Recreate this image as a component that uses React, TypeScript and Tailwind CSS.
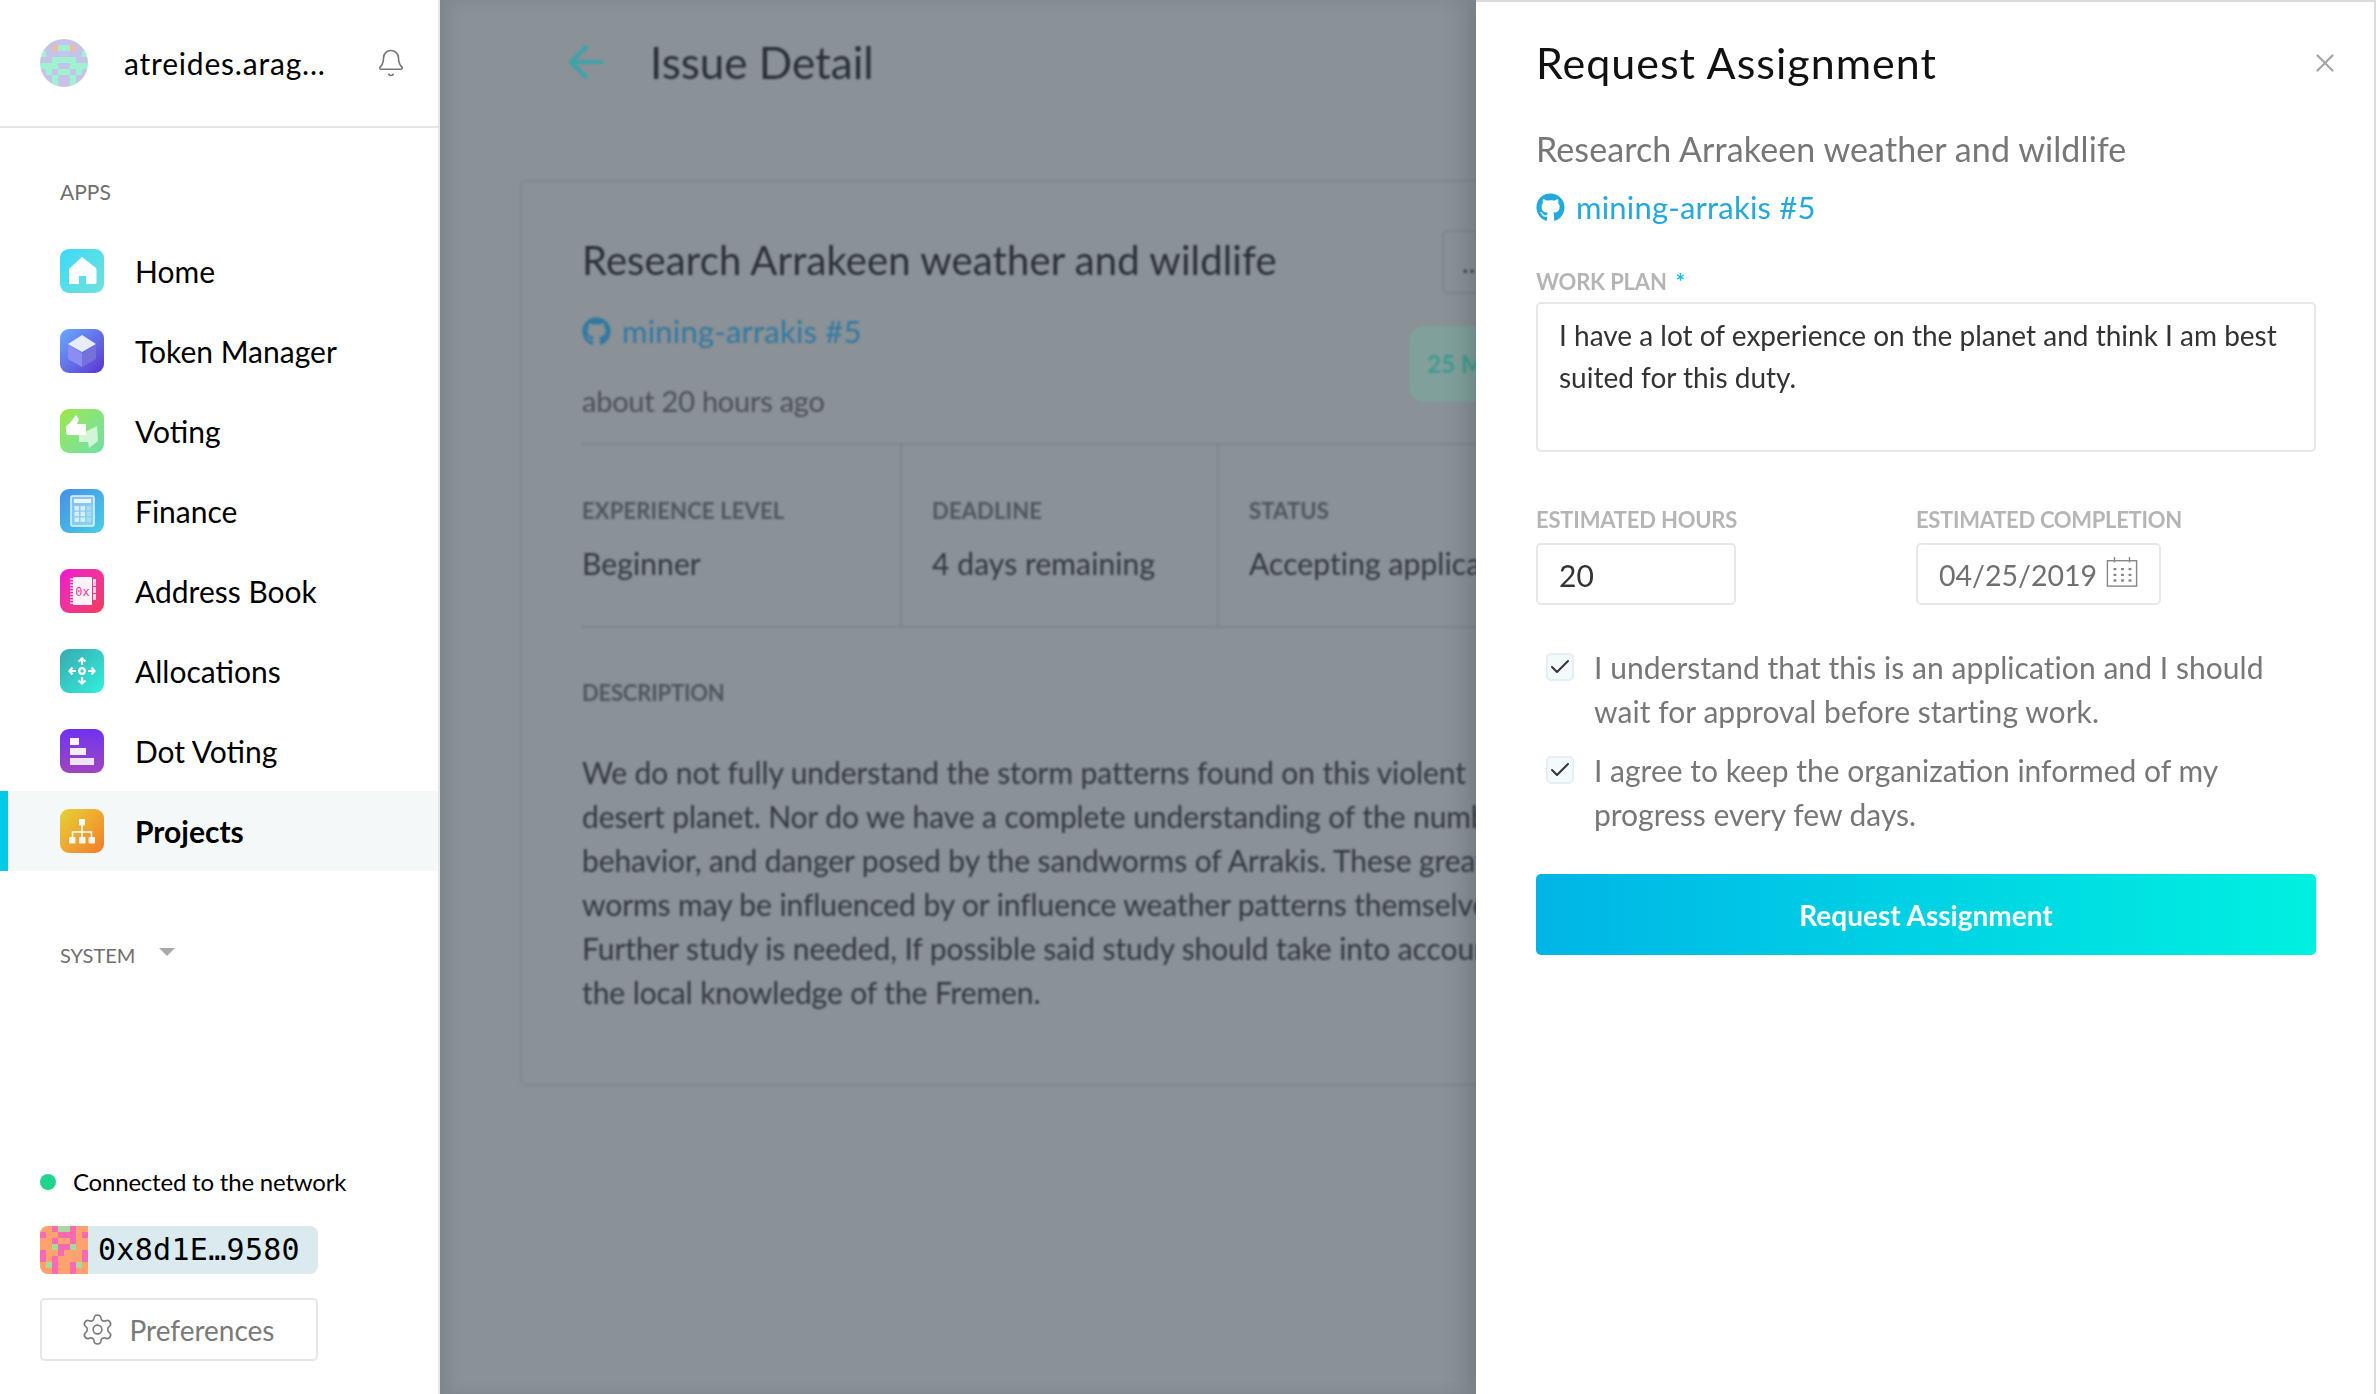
import React from "react";
import { X, Bell, Settings, ArrowLeft, Check } from "lucide-react";
import { FaGithub } from "react-icons/fa";

const FONT = "font-['Lato','Noto_Sans',sans-serif]";

const avatarRows = ["pppppppp", "ppsmmspp", "mppppppm", "ppmmmmpp", "mmmppmmm", "pmpmmpmp", "ppmppmpp", "ppmppmpp"];
const addressRows = ["oopggpoo", "poopppop", "oopoopoo", "oogppgoo", "poopooop", "popooqop", "ogpoopgo", "oopoopoo"];
const blockColors: Record<string, string> = {
  p: "#c6c3e8",
  m: "#9ff2d0",
  s: "#f6b8a6",
};
const addressColors: Record<string, string> = {
  o: "#ffa26f",
  p: "#f66ab2",
  g: "#a9d99b",
  q: "#ffa26f",
};

const Blockies = ({ rows, colors, className }: { rows: string[]; colors: Record<string, string>; className: string }) => (
  <svg viewBox="0 0 8 8" className={className} shapeRendering="crispEdges">
    {rows.map((row, y) =>
      row.split("").map((c, x) => <rect key={`${x}-${y}`} x={x} y={y} width="1" height="1" fill={colors[c]} />)
    )}
  </svg>
);

const HomeIcon = () => (
  <svg viewBox="0 0 44 44" className="w-[44px] h-[44px]">
    <path d="M22 8 L36 19 Q36.500 20 36.500 22 L36.500 34 Q36.500 35 35 35 L26 35 L26 27 L19 27 L19 35 L10 35 Q9 35 9 34 L9 21 Q9 19.500 10 19 Z" fill="#fff" opacity="0.97" />
  </svg>
);

const TokenIcon = () => (
  <svg viewBox="0 0 44 44" className="w-[44px] h-[44px]">
    <path d="M22 6 L36 15 L22 23 L8 15 Z" fill="#e8ebfb" />
    <path d="M8 16 L22 24 L22 38 L8 30 Z" fill="#8b8df0" />
    <path d="M36 16 L22 24 L22 38 L36 30 Z" fill="#7670dc" />
  </svg>
);

const VotingIcon = () => (
  <svg viewBox="0 0 44 44" className="w-[44px] h-[44px]">
    <path d="M16 6 L19 10 L17 15 L26 15 L26 26 L8 26 Q6 26 6 23 L6 19 Q6 16 9 15 Z" fill="#fff" />
    <path d="M19 26 L37 17 L38 32 L29 39 L28 33 L19 33 Z" fill="#fff" opacity="0.65" />
  </svg>
);

const FinanceIcon = () => (
  <svg viewBox="0 0 44 44" className="w-[44px] h-[44px]">
    <rect x="11" y="7" width="23" height="30" rx="1.500" fill="#ffffff" fillOpacity="0.35" stroke="#e4f3fb" strokeWidth="1.500" />
    <rect x="14" y="10" width="17" height="4" fill="#eaf6fc" />
    {[0, 1, 2].map((r) =>
      [0, 1, 2].map((c) => (
        <rect key={`${r}-${c}`} x={14.500 + c * 6} y={17 + r * 5.700} width="4.500" height="4.500" fill="#dff2fb" fillOpacity={c === 2 ? 0.4 : 0.9} />
      ))
    )}
  </svg>
);

const AddressIcon = () => (
  <svg viewBox="0 0 44 44" className="w-[44px] h-[44px]">
    <rect x="13" y="8" width="19" height="28" rx="1" fill="#fff" fillOpacity="0.94" />
    {[10, 13, 16, 19, 22, 25, 28, 31, 34].map((y) => (
      <rect key={y} x="10" y={y - 0.500} width="4" height="1.200" fill="#fff" />
    ))}
    <rect x="33" y="10" width="3" height="7" fill="#fff" fillOpacity="0.8" />
    <rect x="33" y="18" width="3" height="6" fill="#fff" fillOpacity="0.8" />
    <rect x="33" y="25" width="3" height="6" fill="#fff" fillOpacity="0.8" />
    <text x="22.500" y="27" textAnchor="middle" fontSize="12" fill="#f0379a" fontFamily="DejaVu Sans Mono, monospace">0x</text>
  </svg>
);

const AllocationsIcon = () => (
  <svg viewBox="0 0 44 44" className="w-[44px] h-[44px]" fill="none" stroke="#fff" strokeWidth="2.200">
    <circle cx="22" cy="22" r="2.800" />
    <path d="M22 16 V10 M18.500 12.500 L22 9.500 L25.500 12.500 M22 28 V34 M18.500 31.500 L22 34.500 L25.500 31.500 M16 22 H10 M12.500 18.500 L9.500 22 L12.500 25.500 M28 22 H34 M31.500 18.500 L34.500 22 L31.500 25.500" />
  </svg>
);

const DotVotingIcon = () => (
  <svg viewBox="0 0 44 44" className="w-[44px] h-[44px]">
    <rect x="10" y="9" width="9" height="7" fill="#fff" fillOpacity="0.95" />
    <rect x="10" y="19" width="16" height="7" fill="#fff" fillOpacity="0.9" />
    <rect x="10" y="29" width="24" height="7" fill="#fff" fillOpacity="0.85" />
  </svg>
);

const ProjectsIcon = () => (
  <svg viewBox="0 0 44 44" className="w-[44px] h-[44px]">
    <path d="M22 16 V29 M12.500 30 V23 H31.500 V30" fill="none" stroke="#fff" strokeWidth="1.500" />
    <rect x="19" y="10" width="6" height="6.500" rx="0.800" fill="#fff" fillOpacity="0.95" />
    <rect x="9" y="28" width="6.500" height="6.500" rx="0.800" fill="#fff" fillOpacity="0.9" />
    <rect x="19" y="28" width="6.500" height="6.500" rx="0.800" fill="#fff" fillOpacity="0.9" />
    <rect x="28.500" y="28" width="6.500" height="6.500" rx="0.800" fill="#fff" fillOpacity="0.9" />
  </svg>
);

const apps = [
  { name: "Home", bg: "bg-linear-to-br from-[#3bd9f7] to-[#6ee2da]", icon: <HomeIcon /> },
  { name: "Token Manager", bg: "bg-linear-to-br from-[#68aaff] to-[#5a2ed0]", icon: <TokenIcon /> },
  { name: "Voting", bg: "bg-linear-to-br from-[#9ce83f] to-[#70dfa7]", icon: <VotingIcon /> },
  { name: "Finance", bg: "bg-linear-to-br from-[#478ee6] to-[#47cfe6]", icon: <FinanceIcon /> },
  { name: "Address Book", bg: "bg-linear-to-br from-[#f00ed0] to-[#f23a5a]", icon: <AddressIcon /> },
  { name: "Allocations", bg: "bg-linear-to-br from-[#37a9b0] to-[#30f0dc]", icon: <AllocationsIcon /> },
  { name: "Dot Voting", bg: "bg-linear-to-b from-[#6f2ff0] to-[#a043c0]", icon: <DotVotingIcon /> },
  { name: "Projects", bg: "bg-linear-to-br from-[#e3d236] to-[#f27a2a]", icon: <ProjectsIcon /> },
];

const Sidebar = () => (
  <aside className="w-[440px] shrink-0 h-full flex flex-col bg-white border-r-2 border-[#e6e6e6] text-black">
    <div className="h-[128px] shrink-0 flex items-center pl-[40px] pr-[32px] border-b-2 border-[#e6e6e6]">
      <Blockies rows={avatarRows} colors={blockColors} className="w-[48px] h-[48px] rounded-full" />
      <span className="ml-[36px] text-[30px] leading-none tracking-[0.8px]">atreides.arag...</span>
      <Bell className="ml-auto text-[#777] w-[30px] h-[32px]" strokeWidth={1.300} />
    </div>

    <div className="pl-[60px] pt-[52px] pb-[27px] text-[21px] leading-[24px] text-[#6f6f6f]">APPS</div>

    <nav className="flex flex-col">
      {apps.map((app) => {
        const active = app.name === "Projects";
        return (
          <div
            key={app.name}
            className={`h-[80px] flex items-center ${active ? "bg-[#f5f8f9] border-l-8 border-[#00cbe6] pl-[52px] font-bold" : "pl-[60px]"}`}
          >
            <div className={`w-[44px] h-[44px] rounded-[9px] overflow-hidden ${app.bg}`}>{app.icon}</div>
            <span className="ml-[31px] text-[30px] leading-none">{app.name}</span>
          </div>
        );
      })}
    </nav>

    <div className="mt-[72px] pl-[60px] flex items-center text-[#6f6f6f] text-[20px] leading-[24px]">
      SYSTEM
      <span className="ml-[24px] mb-[6px] w-0 h-0 border-x-[8px] border-x-transparent border-t-[8px] border-t-[#aaa]" />
    </div>

    <div className="mt-auto px-[40px] pb-[33px]">
      <div className="flex items-center text-[24px] leading-[28px] tracking-[-0.2px]">
        <span className="w-[16px] h-[16px] rounded-full bg-[#21d48e]" />
        <span className="ml-[17px]">Connected to the network</span>
      </div>
      <div className="mt-[30px] w-[278px] h-[48px] flex items-center rounded-[8px] overflow-hidden bg-[#daeaef]">
        <Blockies rows={addressRows} colors={addressColors} className="w-[48px] h-[48px]" />
        <span className="ml-[10px] text-[30px] leading-none font-['DejaVu_Sans_Mono',monospace] tracking-[0.3px]">0x8d1E…9580</span>
      </div>
      <button className="mt-[24px] w-[278px] h-[63px] flex items-center justify-center border-2 border-[#e6e6e6] rounded-[5px] text-[#7a7a7a] text-[28px] pr-[4px]">
        <Settings className="w-[35px] h-[35px]" strokeWidth={1.100} />
        <span className="ml-[15px]">Preferences</span>
      </button>
    </div>
  </aside>
);

const Fact = ({ label, value, className }: { label: string; value: string; className: string }) => (
  <div className={`h-full pt-[52px] ${className}`}>
    <div className="text-[22px] leading-[28px] font-bold text-[#50565d] whitespace-nowrap tracking-[0.15px]">{label}</div>
    <div className="mt-[20px] text-[30px] leading-[36px] text-[#33383f] whitespace-nowrap tracking-[0.1px]">{value}</div>
  </div>
);

const IssueDetail = () => (
  <div className="absolute inset-0 blur-[1px]">
    <header className="h-[123px] flex items-center pl-[120px]">
      <ArrowLeft className="w-[52px] h-[52px] text-[#35a5aa]" strokeWidth={1.700} />
      <h1 className="ml-[38px] text-[44px] leading-none text-[#2b3037]">Issue Detail</h1>
    </header>
    <section className="relative mt-[57px] ml-[80px] w-[1400px] h-[906px] border-2 border-[#81888e] rounded-[6px] px-[60px] pt-[53px]">
      <h2 className="text-[40px] leading-[50px] text-[#2b3037] tracking-[0.12px]">Research Arrakeen weather and wildlife</h2>
      <div className="mt-[28px] flex items-center text-[#3178a0]">
        <FaGithub className="w-[29px] h-[29px]" />
        <span className="ml-[11px] text-[31px] leading-[36px] tracking-[0.2px]">mining-arrakis #5</span>
      </div>
      <p className="mt-[34px] text-[29px] leading-[36px] text-[#4c5056] tracking-[-0.25px]">about 20 hours ago</p>
      <div className="mt-[24px] h-[185px] border-y-2 border-[#7f868c] flex">
        <Fact label="EXPERIENCE LEVEL" value="Beginner" className="w-[320px] border-r-2 border-[#7f868c]" />
        <Fact label="DEADLINE" value="4 days remaining" className="w-[317px] pl-[30px] border-r-2 border-[#7f868c]" />
        <Fact label="STATUS" value="Accepting applications" className="pl-[30px]" />
      </div>
      <div className="mt-[51px] text-[22px] leading-[28px] font-bold text-[#50565d] tracking-[-0.2px]">DESCRIPTION</div>
      <p className="mt-[43px] w-[1000px] text-[30px] leading-[44px] text-[#33383f] tracking-[-0.09px]">
        <span className="whitespace-nowrap block">We do not fully understand the storm patterns found on this violent</span>
        <span className="whitespace-nowrap block">desert planet. Nor do we have a complete understanding of the number,</span>
        <span className="whitespace-nowrap block">behavior, and danger posed by the sandworms of Arrakis. These great</span>
        <span className="whitespace-nowrap block">worms may be influenced by or influence weather patterns themselves.</span>
        <span className="whitespace-nowrap block">Further study is needed, If possible said study should take into account</span>
        <span className="whitespace-nowrap block">the local knowledge of the Fremen.</span>
      </p>
      <div className="absolute left-[920px] top-[48px] w-[60px] h-[64px] border-2 border-[#7f868c] rounded-[6px] flex items-center justify-center text-[#3c4249] text-[28px]">...</div>
      <div className="absolute left-[887px] top-[144px] w-[160px] h-[76px] rounded-[16px] bg-[#80a09c] flex items-center pl-[18px] text-[#3f9c90] text-[24px] font-bold whitespace-nowrap">25 Mar</div>
    </section>
  </div>
);

const Check2 = () => (
  <div className="mt-[8px] w-[28px] h-[28px] shrink-0 rounded-[5px] border-2 border-[#e3eff3] bg-[#f4f9fb] flex items-center justify-center">
    <Check className="w-[24px] h-[24px] text-[#333]" strokeWidth={2} />
  </div>
);

const RequestPanel = () => (
  <aside className="absolute top-0 bottom-0 left-[1036px] w-[900px] bg-white border-t-2 border-r-2 border-[#dcdcdc] shadow-[-6px_0_24px_rgba(50,55,60,0.3)] pl-[60px] pr-[58px] blur-[0.5px]">
    <div className="relative">
      <h2 className="pt-[37px] text-[43px] leading-[48px] tracking-[1px] text-[#111] whitespace-nowrap">Request Assignment</h2>
      <X className="absolute right-[-24px] top-[46px] w-[30px] h-[30px] text-[#a5a5a5]" strokeWidth={1.800} />
    </div>
    <p className="mt-[42px] text-[34px] leading-[40px] text-[#777] tracking-[0.1px]">Research Arrakeen weather and wildlife</p>
    <div className="mt-[20px] flex items-center text-[#23a8e0]">
      <FaGithub className="w-[29px] h-[29px]" />
      <span className="ml-[11px] text-[31px] leading-[36px] tracking-[0.2px]">mining-arrakis #5</span>
    </div>
    <div className="mt-[44px] text-[22px] leading-[26px] font-bold text-[#b5b5b5] tracking-[-0.2px]">
      WORK PLAN <span className="ml-[4px] text-[#08bee5]">*</span>
    </div>
    <div className="mt-[7px] w-[780px] h-[150px] border-2 border-[#e8e8e8] rounded-[5px] px-[21px] py-[10px] text-[28px] leading-[42px] text-[#333]">
      I have a lot of experience on the planet and think I am best suited for this duty.
    </div>
    <div className="mt-[54px] flex">
      <div className="w-[380px]">
        <div className="text-[22px] leading-[28px] font-bold text-[#b5b5b5] whitespace-nowrap tracking-[-0.2px]">ESTIMATED HOURS</div>
        <div className="mt-[9px] w-[200px] h-[62px] border-2 border-[#e8e8e8] rounded-[5px] flex items-center pl-[21px] pt-[2px] text-[30px] text-[#333]">20</div>
      </div>
      <div>
        <div className="text-[22px] leading-[28px] font-bold text-[#b5b5b5] whitespace-nowrap tracking-[-0.3px]">ESTIMATED COMPLETION</div>
        <div className="mt-[9px] w-[245px] h-[62px] border-2 border-[#e8e8e8] rounded-[5px] flex items-center pl-[21px] pt-[2px] text-[28.500px] text-[#707070]">
          04/25/2019
          <svg viewBox="0 0 34 34" className="ml-[9px] mb-[6px] w-[32px] h-[32px]" fill="none" stroke="#888" strokeWidth="1.500">
            <rect x="1.500" y="5" width="31" height="27" />
            <path d="M9 1 V7 M25 1 V7" />
            <path d="M8 14 H11 M16 14 H19 M24 14 H27 M8 20 H11 M16 20 H19 M24 20 H27 M8 26 H11 M16 26 H19 M24 26 H27" strokeWidth="2.500" />
          </svg>
        </div>
      </div>
    </div>
    <div className="mt-[40px] pl-[10px] flex gap-[20px] text-[30px] leading-[44px] text-[#777] tracking-[0.05px]">
      <Check2 />
      <p>I understand that this is an application and I should wait for approval before starting work.</p>
    </div>
    <div className="mt-[15px] pl-[10px] flex gap-[20px] text-[30px] leading-[44px] text-[#777]">
      <Check2 />
      <p>I agree to keep the organization informed of my progress every few days.</p>
    </div>
    <button className="mt-[38px] w-[780px] h-[81px] rounded-[5px] bg-linear-to-r from-[#00b5e6] to-[#00f0e0] text-white text-[28px] font-bold">
      Request Assignment
    </button>
  </aside>
);

export default function App() {
  return (
    <div className={`w-[2376px] h-[1394px] flex overflow-hidden ${FONT}`}>
      <Sidebar />
      <main className="relative flex-1 h-full overflow-hidden bg-[#8a9197] shadow-[inset_8px_0_14px_rgba(60,65,70,0.14)]">
        <IssueDetail />
        <RequestPanel />
      </main>
    </div>
  );
}
